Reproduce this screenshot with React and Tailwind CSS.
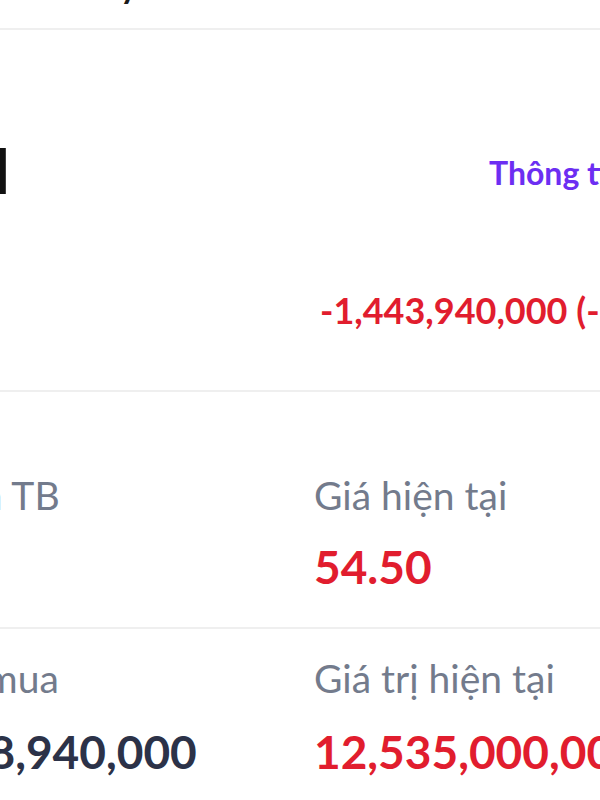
import React from "react";

const font = { fontFamily: "Lato, 'Noto Sans', sans-serif" };

export default function App() {
  return (
    <div
      className="w-[600px] h-[800px] overflow-hidden bg-white text-[#2c3248]"
      style={font}
    >
      {/* header (scrolled, only a descender visible) */}
      <div className="h-[30px] overflow-hidden border-b-2 border-[#efefef]">
        <div className="mt-[-32px] ml-[2px] whitespace-nowrap text-[34px] leading-none font-bold text-[#1a1a1a]">
          Hôm nay
        </div>
      </div>

      {/* ticker section */}
      <div className="h-[362px] border-b-2 border-[#efefef] flex flex-col">
        <div className="flex items-start pt-[108px]">
          <div className="w-[11px] shrink-0 flex justify-end">
            <span className="whitespace-nowrap text-[63px] leading-none font-bold text-[#111111]">
              SSI
            </span>
          </div>
          <div className="ml-[478px] mt-[19px] whitespace-nowrap text-[32px] leading-none font-bold text-[#6c2ef2]">
            Thông tin
          </div>
        </div>
        <div className="mt-[91px] pl-[320px] whitespace-nowrap text-[36px] leading-none font-bold text-[#e11d2e]">
          -1,443,940,000 (-10.33%)
        </div>
      </div>

      {/* row 1 */}
      <div className="h-[237px] border-b-2 border-[#efefef]">
        <div className="ml-[-127px] grid grid-cols-[441px_400px] pt-[84px]">
          <div className="flex flex-col">
            <div className="whitespace-nowrap text-[39px] leading-none text-[#737b8c]">
              Giá vốn TB
            </div>
          </div>
          <div className="flex flex-col">
            <div className="whitespace-nowrap text-[39px] leading-none text-[#737b8c]">
              Giá hiện tại
            </div>
            <div className="mt-[29px] whitespace-nowrap text-[46px] leading-none font-bold text-[#e11d2e]">
              54.50
            </div>
          </div>
        </div>
      </div>

      {/* row 2 */}
      <div className="h-[200px]">
        <div className="ml-[-129px] grid grid-cols-[443px_400px] pt-[30px]">
          <div className="flex flex-col">
            <div className="whitespace-nowrap text-[39px] leading-none text-[#737b8c]">
              Giá trị mua
            </div>
            <div className="mt-[31px] whitespace-nowrap text-[46px] leading-none font-bold text-[#2c3248]">
              13,978,940,000
            </div>
          </div>
          <div className="flex flex-col">
            <div className="whitespace-nowrap text-[39px] leading-none text-[#737b8c]">
              Giá trị hiện tại
            </div>
            <div className="mt-[31px] whitespace-nowrap text-[46px] leading-none font-bold text-[#e11d2e]">
              12,535,000,000
            </div>
          </div>
        </div>
      </div>
    </div>
  );
}
